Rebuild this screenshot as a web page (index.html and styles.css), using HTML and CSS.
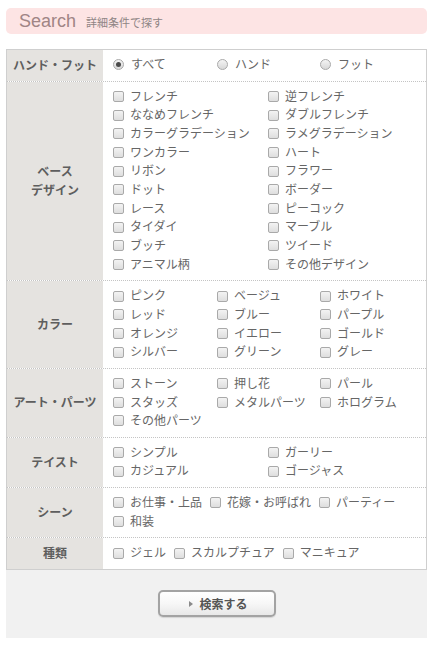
FILE: index.html
```html
<!DOCTYPE html>
<html lang="ja">
<head>
<meta charset="utf-8">
<title>Search</title>
<link rel="stylesheet" href="styles.css">
</head>
<body>
<div class="page">
  <div class="head"><span class="title">Search</span><span class="sub">詳細条件で探す</span></div>
  <div class="box">
    <div class="tbl">
      <div class="row">
        <div class="lab">ハンド・フット</div>
        <div class="opts c3">
          <label class="it"><span class="rd on"></span>すべて</label>
          <label class="it"><span class="rd"></span>ハンド</label>
          <label class="it"><span class="rd"></span>フット</label>
        </div>
      </div>
      <div class="row">
        <div class="lab">ベース<br>デザイン</div>
        <div class="opts c2">
          <label class="it"><span class="cb"></span>フレンチ</label>
          <label class="it"><span class="cb"></span>逆フレンチ</label>
          <label class="it"><span class="cb"></span>ななめフレンチ</label>
          <label class="it"><span class="cb"></span>ダブルフレンチ</label>
          <label class="it"><span class="cb"></span>カラーグラデーション</label>
          <label class="it"><span class="cb"></span>ラメグラデーション</label>
          <label class="it"><span class="cb"></span>ワンカラー</label>
          <label class="it"><span class="cb"></span>ハート</label>
          <label class="it"><span class="cb"></span>リボン</label>
          <label class="it"><span class="cb"></span>フラワー</label>
          <label class="it"><span class="cb"></span>ドット</label>
          <label class="it"><span class="cb"></span>ボーダー</label>
          <label class="it"><span class="cb"></span>レース</label>
          <label class="it"><span class="cb"></span>ピーコック</label>
          <label class="it"><span class="cb"></span>タイダイ</label>
          <label class="it"><span class="cb"></span>マーブル</label>
          <label class="it"><span class="cb"></span>ブッチ</label>
          <label class="it"><span class="cb"></span>ツイード</label>
          <label class="it"><span class="cb"></span>アニマル柄</label>
          <label class="it"><span class="cb"></span>その他デザイン</label>
        </div>
      </div>
      <div class="row">
        <div class="lab">カラー</div>
        <div class="opts c3">
          <label class="it"><span class="cb"></span>ピンク</label>
          <label class="it"><span class="cb"></span>ベージュ</label>
          <label class="it"><span class="cb"></span>ホワイト</label>
          <label class="it"><span class="cb"></span>レッド</label>
          <label class="it"><span class="cb"></span>ブルー</label>
          <label class="it"><span class="cb"></span>パープル</label>
          <label class="it"><span class="cb"></span>オレンジ</label>
          <label class="it"><span class="cb"></span>イエロー</label>
          <label class="it"><span class="cb"></span>ゴールド</label>
          <label class="it"><span class="cb"></span>シルバー</label>
          <label class="it"><span class="cb"></span>グリーン</label>
          <label class="it"><span class="cb"></span>グレー</label>
        </div>
      </div>
      <div class="row">
        <div class="lab">アート・パーツ</div>
        <div class="opts c3">
          <label class="it"><span class="cb"></span>ストーン</label>
          <label class="it"><span class="cb"></span>押し花</label>
          <label class="it"><span class="cb"></span>パール</label>
          <label class="it"><span class="cb"></span>スタッズ</label>
          <label class="it"><span class="cb"></span>メタルパーツ</label>
          <label class="it"><span class="cb"></span>ホログラム</label>
          <label class="it"><span class="cb"></span>その他パーツ</label>
        </div>
      </div>
      <div class="row">
        <div class="lab">テイスト</div>
        <div class="opts c2">
          <label class="it"><span class="cb"></span>シンプル</label>
          <label class="it"><span class="cb"></span>ガーリー</label>
          <label class="it"><span class="cb"></span>カジュアル</label>
          <label class="it"><span class="cb"></span>ゴージャス</label>
        </div>
      </div>
      <div class="row">
        <div class="lab">シーン</div>
        <div class="opts flow">
          <label class="it"><span class="cb"></span>お仕事・上品</label>
          <label class="it"><span class="cb"></span>花嫁・お呼ばれ</label>
          <label class="it"><span class="cb"></span>パーティー</label>
          <label class="it"><span class="cb"></span>和装</label>
        </div>
      </div>
      <div class="row">
        <div class="lab">種類</div>
        <div class="opts flow">
          <label class="it"><span class="cb"></span>ジェル</label>
          <label class="it"><span class="cb"></span>スカルプチュア</label>
          <label class="it"><span class="cb"></span>マニキュア</label>
        </div>
      </div>
    </div>
    <div class="foot">
      <button class="btn" type="button"><span class="tri"></span>検索する</button>
    </div>
  </div>
</div>
</body>
</html>
```

FILE: styles.css
```css
* { box-sizing: border-box; }
html, body { margin: 0; padding: 0; background: #fff; }
body {
  font-family: "Noto Sans CJK JP", "Noto Sans", sans-serif;
  font-size: 12px;
  color: #666;
}
.page {
  width: 421px;
  margin: 8px 0 0 6px;
}
.head {
  height: 26px;
  background: #fde4e4;
  border-radius: 5px;
  display: flex;
  align-items: center;
  padding-left: 13px;
}
.title {
  font-family: "Liberation Sans", Arial, sans-serif;
  font-size: 18px;
  color: #a08585;
  margin-right: 10px;
  line-height: 1;
}
.sub {
  font-size: 11px;
  color: #8f8484;
  line-height: 1;
  padding-top: 2px;
}
.box {
  margin-top: 15px;
}
.tbl {
  border: 1px solid #cfcfcf;
  background: #fff;
}
.row {
  display: flex;
  border-bottom: 1px dotted #c4c4c4;
  background: #fff;
}
.row:last-child { border-bottom: none; }
.lab {
  width: 96px;
  flex: none;
  background: #e5e3e0;
  display: flex;
  align-items: center;
  justify-content: center;
  text-align: center;
  font-weight: bold;
  color: #5e5e5e;
  line-height: 18.67px;
}
.opts {
  flex: 1;
  padding: 5px 0 7px 10px;
  line-height: 18.67px;
}
.c3 {
  display: grid;
  grid-template-columns: 104px 103px 104px;
}
.c2 {
  display: grid;
  grid-template-columns: 155px 155px;
}
.flow {
  display: flex;
  flex-wrap: wrap;
}
.flow .it { margin-right: 8px; }
.it {
  display: flex;
  align-items: center;
  white-space: nowrap;
  height: 18.67px;
}
.cb {
  width: 11px;
  height: 11px;
  flex: none;
  border: 1px solid #a9a9a9;
  border-radius: 2px;
  background: linear-gradient(#f3f3f3, #dedede);
  margin-right: 6px;
  margin-top: 1px;
}
.rd {
  width: 11px;
  height: 11px;
  flex: none;
  border: 1px solid #a9a9a9;
  border-radius: 50%;
  background: linear-gradient(#f4f4f4, #d8d8d8);
  margin-right: 7px;
  margin-top: 1px;
  position: relative;
}
.rd.on::after {
  content: "";
  position: absolute;
  left: 2px;
  top: 2px;
  width: 5px;
  height: 5px;
  border-radius: 50%;
  background: #4a4a4a;
}
.foot {
  background: #f1f1f1;
  height: 68px;
  display: flex;
  justify-content: center;
  padding-top: 20px;
}
.btn {
  width: 118px;
  height: 27px;
  border: 2px solid #a3a3a3;
  border-radius: 5px;
  background: linear-gradient(#ffffff, #f7f7f7 50%, #e8e8e8);
  font-family: "Noto Sans CJK JP", sans-serif;
  font-size: 12px;
  font-weight: bold;
  color: #555;
  display: flex;
  align-items: center;
  justify-content: center;
  padding: 0 0 0 4px;
  box-shadow: 0 1px 1px rgba(0,0,0,0.12);
}
.tri {
  width: 0;
  height: 0;
  border-left: 4px solid #8a8a8a;
  border-top: 3px solid transparent;
  border-bottom: 3px solid transparent;
  margin-right: 6px;
}
```
